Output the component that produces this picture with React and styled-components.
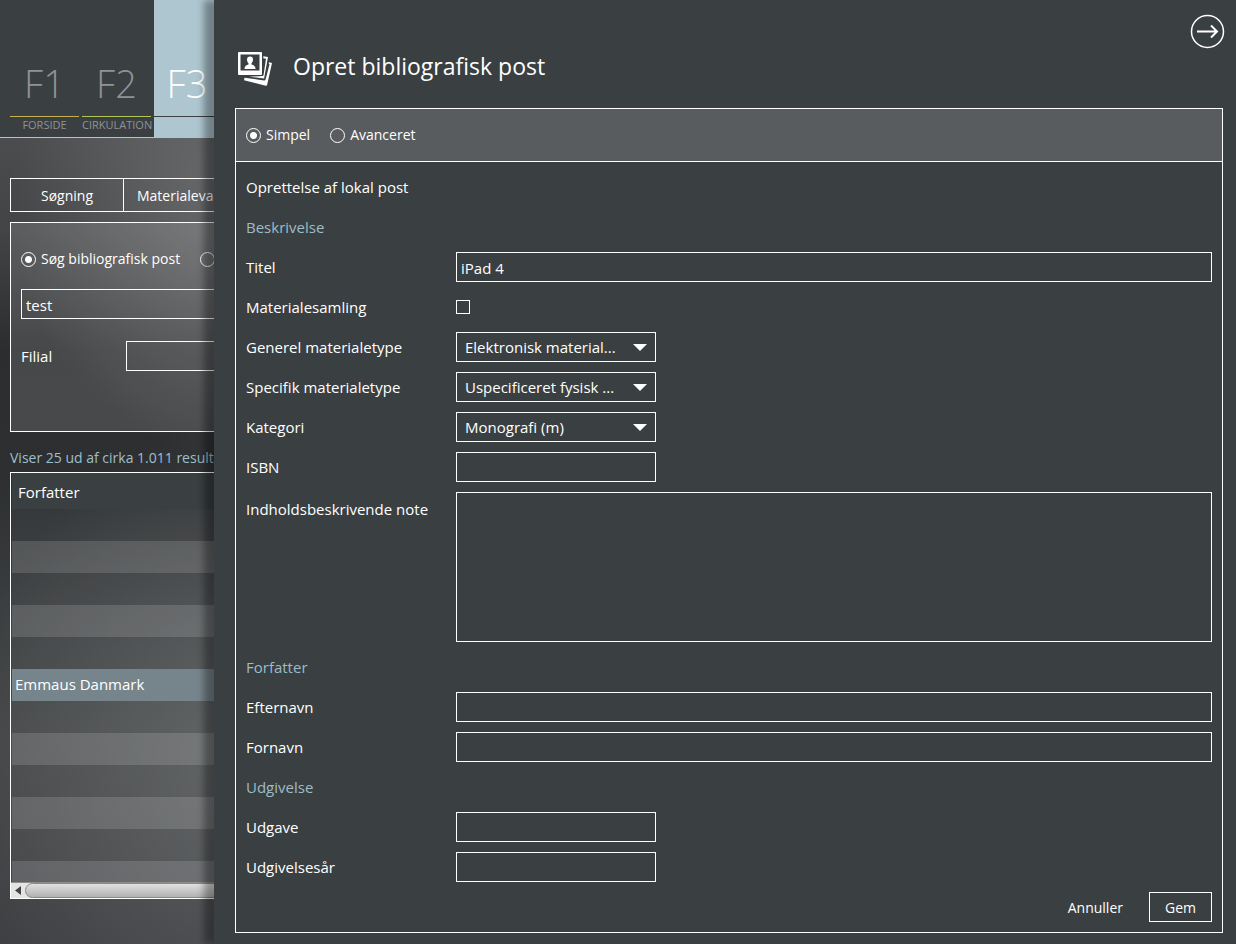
import { useState } from "react";
import styled, { createGlobalStyle, css } from "styled-components";

const GlobalStyle = createGlobalStyle`
  * {
    box-sizing: border-box;
  }

  body {
    margin: 0;
    background: #3a3f42;
    color: #ffffff;
    font-family: "Open Sans", "Noto Sans", sans-serif;
    font-size: 15px;
    line-height: 20px;
  }

  input, select, textarea, button {
    font: inherit;
    color: inherit;
    margin: 0;
  }
`;

const Page = styled.div`
  display: flex;
  min-height: 100vh;
`;

/* search page, partly covered by the drawer */
const Behind = styled.div`
  flex: 0 0 214px;
  overflow: hidden;
  display: flex;
  flex-direction: column;
  background:
    radial-gradient(ellipse 230px 260px at 240px 200px, rgba(130, 132, 134, 0.6), rgba(130, 132, 134, 0) 100%),
    radial-gradient(ellipse 300px 340px at 260px 760px, rgba(125, 128, 130, 0.5), rgba(125, 128, 130, 0) 100%),
    linear-gradient(180deg, #4a4c4e 138px, #424446 230px, #2b2d2f 350px, #2d2f31 480px, #3a3d3f 600px, #434546 740px, #3e4043 100%);
`;

const Tabs = styled.nav`
  display: flex;
  width: 300px;
  height: 138px;
  padding-left: 10px;
  background: #3a3f42;
  border-bottom: 1px solid #aec6d0;
`;

const Tab = styled.a`
  display: flex;
  flex-direction: column;
  justify-content: flex-end;
  flex: 0 0 72px;
  min-width: 0;
  padding-right: 3px;
  text-align: center;
  text-decoration: none;
  color: #909294;
  ${(p) => p.$active && css`
    color: #ffffff;
    background: #aec6d0;
    padding-right: 6px;
  `}
`;

const TabKey = styled.span`
  font-size: 38px;
  font-weight: 300;
  line-height: 48px;
  padding-bottom: 9px;
  border-bottom: 1px solid ${(p) => p.$line};
`;

const TabName = styled.span`
  height: 20px;
  font-size: 11px;
  line-height: 16px;
`;

const Content = styled.div`
  width: 500px;
  padding: 40px 0 0 10px;
`;

const SubTabs = styled.div`
  display: flex;
  border: 1px solid #ffffff;
`;

const SubTab = styled.button`
  height: 32px;
  padding: 2px 13px 0;
  min-width: ${(p) => p.$min || 0}px;
  border: 0;
  border-right: 1px solid #ffffff;
  background: none;
  font-size: 14px;
`;

const SearchBox = styled.section`
  height: 210px;
  margin-top: 10px;
  padding: 26px 10px 0;
  border: 1px solid #ffffff;
  background: rgba(255, 255, 255, 0.13);
`;

const RadioRow = styled.div`
  display: flex;
  align-items: center;
  gap: 20px;
  font-size: 14px;
`;

const RadioLabel = styled.label`
  display: flex;
  align-items: center;
  gap: 5px;
`;

const Radio = styled.input`
  appearance: none;
  width: 15px;
  height: 15px;
  border: 1px solid #ffffff;
  border-radius: 50%;

  &:checked {
    background: radial-gradient(circle, #ffffff 3px, transparent 4px);
  }
`;

const TextInput = styled.input`
  width: ${(p) => (p.$short ? "200px" : "100%")};
  height: 30px;
  padding: 2px 4px 0;
  border: 1px solid #ffffff;
  border-radius: 0;
  background: transparent;
  outline: none;
`;

const SearchField = styled.div`
  margin-top: 20px;
  display: flex;
`;

const BranchField = styled.div`
  display: flex;
  align-items: center;
  margin-top: 22px;

  label {
    flex: 0 0 105px;
  }
`;

const ResultInfo = styled.p`
  margin: 16px 0 4px;
  font-size: 14px;
  color: #9dbfcc;
  white-space: nowrap;
`;

const ResultBox = styled.div`
  height: 427px;
  display: flex;
  flex-direction: column;
  border: 1px solid #ffffff;
  padding-left: 1px;
`;

const ResultTable = styled.table`
  width: 100%;
  table-layout: fixed;
  border-collapse: collapse;

  th {
    width: 200px;
    height: 36px;
    padding: 2px 6px 0;
    font-weight: 400;
    text-align: left;
    background: #3a3f42;
    border-right: 2px solid #45484b;
  }

  td {
    height: 32px;
    padding: 0 3px 2px;
  }

  tbody tr:nth-child(odd) {
    background: rgba(255, 255, 255, 0.03);
  }

  tbody tr:nth-child(even) {
    background: rgba(255, 255, 255, 0.16);
  }

  tbody tr.selected {
    background: #76858b;
  }
`;

const TableClip = styled.div`
  flex: 1;
  overflow: hidden;
`;

const ScrollBar = styled.div`
  display: flex;
  height: 16px;
  margin-left: -1px;
  border-top: 1px solid #8c8c8c;
  background: #e4e4e4;

  svg {
    flex: 0 0 14px;
  }
`;

const Thumb = styled.div`
  flex: 1;
  border: 1px solid #888888;
  border-radius: 8px;
  background: linear-gradient(180deg, #e0e0e0, #b2b2b2);
`;

const Drawer = styled.main`
  position: relative;
  flex: 1;
  min-width: 0;
  display: flex;
  flex-direction: column;
  padding: 14px 13px 11px 21px;
  background: #3a3f42;
  box-shadow: -10px 0 7px rgba(0, 0, 0, 0.35);
`;

const DrawerHead = styled.header`
  display: flex;
  align-items: flex-start;
  height: 94px;
`;

const HeadIcon = styled.svg`
  margin: 36px 20px 0 1px;
  flex: none;
`;

const Heading = styled.h1`
  flex: 1;
  margin: 36px 0 0;
  font-size: 23px;
  font-weight: 400;
  line-height: 32px;
`;

const CloseButton = styled.button`
  display: flex;
  padding: 0;
  margin-right: -2px;
  border: 0;
  background: none;
`;

const Panel = styled.form`
  flex: 1;
  display: flex;
  flex-direction: column;
  border: 1px solid #ffffff;
`;

const ModeBar = styled.div`
  height: 53px;
  display: flex;
  align-items: center;
  padding: 0 10px;
  background: #585c5f;
  border-bottom: 1px solid #ffffff;
`;

const Fields = styled.div`
  flex: 1;
  display: flex;
  flex-direction: column;
  gap: 10px;
  padding: 10px 10px 0;
`;

const Line = styled.div`
  display: flex;
  align-items: center;
  height: 30px;
`;

const Section = styled(Line)`
  color: #9dbcc6;
`;

const Field = styled.div`
  display: grid;
  grid-template-columns: 210px 1fr;
  align-items: ${(p) => (p.$top ? "start" : "center")};
  min-height: 30px;

  label {
    padding-top: ${(p) => (p.$top ? "7px" : "0")};
  }
`;

const Check = styled.input`
  appearance: none;
  width: 14px;
  height: 14px;
  border: 1px solid #ffffff;

  &:checked {
    background: #ffffff;
  }
`;

const SelectWrap = styled.div`
  display: grid;
  grid-template-columns: 1fr 30px;
  align-items: center;
  width: 200px;
  height: 30px;
  border: 1px solid #ffffff;

  select {
    grid-area: 1 / 1 / 2 / 3;
    appearance: none;
    width: 100%;
    height: 28px;
    padding: 0 30px 0 8px;
    border: 0;
    background: transparent;
    outline: none;
  }

  option {
    background: #3a3f42;
  }

  svg {
    grid-area: 1 / 2 / 2 / 3;
    justify-self: center;
    pointer-events: none;
  }
`;

const Note = styled.textarea`
  display: block;
  width: 100%;
  height: 150px;
  padding: 4px;
  border: 1px solid #ffffff;
  border-radius: 0;
  background: transparent;
  resize: none;
  outline: none;
`;

const Actions = styled.footer`
  display: flex;
  justify-content: flex-end;
  gap: 10px;
  padding: 10px;
`;

const Button = styled.button`
  height: 30px;
  padding: 2px 15px 0;
  border: 1px solid ${(p) => (p.$plain ? "transparent" : "#ffffff")};
  background: none;
  font-size: 14px;
`;

const rows = ["", "", "", "", "", "Emmaus Danmark", "", "", "", "", "", ""];

function Select({ id, value }) {
  return (
    <SelectWrap>
      <select id={id} defaultValue={value}>
        <option value={value}>{value}</option>
      </select>
      <svg width="14" height="7" viewBox="0 0 14 7">
        <path d="M0 0h14L7 7z" fill="#fff" />
      </svg>
    </SelectWrap>
  );
}

function TextField({ id, label, short, value }) {
  return (
    <Field>
      <label htmlFor={id}>{label}</label>
      <TextInput id={id} $short={short} defaultValue={value} />
    </Field>
  );
}

function SelectField({ id, label, value }) {
  return (
    <Field>
      <label htmlFor={id}>{label}</label>
      <Select id={id} value={value} />
    </Field>
  );
}

function SearchPage() {
  return (
    <Behind>
      <Tabs>
        <Tab href="#f1"><TabKey $line="#c4ae50">F1</TabKey><TabName>FORSIDE</TabName></Tab>
        <Tab href="#f2"><TabKey $line="#b0c458">F2</TabKey><TabName>CIRKULATION</TabName></Tab>
        <Tab href="#f3" $active><TabKey $line="#3a3f42">F3</TabKey><TabName /></Tab>
      </Tabs>
      <Content>
        <SubTabs>
          <SubTab type="button" $min={113}>Søgning</SubTab>
          <SubTab type="button">Materialevalg</SubTab>
        </SubTabs>
        <SearchBox>
          <RadioRow>
            <RadioLabel><Radio type="radio" name="search" defaultChecked />Søg bibliografisk post</RadioLabel>
            <RadioLabel><Radio type="radio" name="search" aria-label="Søg eksemplar" /></RadioLabel>
          </RadioRow>
          <SearchField><TextInput aria-label="Søg" defaultValue="test" /></SearchField>
          <BranchField>
            <label htmlFor="branch">Filial</label>
            <TextInput id="branch" />
          </BranchField>
        </SearchBox>
        <ResultInfo>Viser 25 ud af cirka 1.011 resultater</ResultInfo>
        <ResultBox>
          <TableClip>
            <ResultTable>
              <thead>
                <tr><th>Forfatter</th><th /></tr>
              </thead>
              <tbody>
                {rows.map((name, i) => (
                  <tr key={i} className={name ? "selected" : ""}><td>{name}</td><td /></tr>
                ))}
              </tbody>
            </ResultTable>
          </TableClip>
          <ScrollBar>
            <svg width="14" height="15" viewBox="0 0 14 15"><path d="M10 3v9L4 7.500z" fill="#444" /></svg>
            <Thumb />
          </ScrollBar>
        </ResultBox>
      </Content>
    </Behind>
  );
}

export default function App() {
  const [mode, setMode] = useState("simpel");

  return (
    <Page>
      <GlobalStyle />
      <SearchPage />
      <Drawer>
        <DrawerHead>
          <HeadIcon width="37" height="37" viewBox="0 0 37 37" fill="none">
            <path fillRule="evenodd" fill="#fff" d="M3 2h22q1 0 1 1v21q0 1-1 1H3q-1 0-1-1V3q0-1 1-1zM4.500 4.500v16h19v-16z" />
            <path fill="#fff" d="M14 6.500a3 3.300 0 0 1 3 3.300c0 1.500-.7 2.600-1.500 3.400v1.200c2.500.6 4 1.600 4 4.600H8.500c0-3 1.500-4 4-4.600v-1.200c-.8-.8-1.500-1.900-1.500-3.400a3 3.300 0 0 1 3-3.300z" />
            <path fill="#fff" d="M27.300 6.200l4.700.9-3.900 21.300-14.600-1.700 12.700-.7q1.200-.1 1.400-1.300l2.400-16-2.700-.5z" />
            <path fill="#fff" d="M33 12.200l3 .9-4.900 21.800q-.3 1-1.300.8L8 30.300l.6-2.600 19.500 2.800q1.200.1 1.500-1.100l4-15.300-.9-.3z" />
          </HeadIcon>
          <Heading>Opret bibliografisk post</Heading>
          <CloseButton type="button" aria-label="Luk">
            <svg width="35" height="35" viewBox="0 0 35 35" fill="none" stroke="#fff">
              <circle cx="17.500" cy="17.500" r="16" strokeWidth="1.500" />
              <path d="M7 17.500h20M21 11.500l6 6-6 6" strokeWidth="2" />
            </svg>
          </CloseButton>
        </DrawerHead>
        <Panel onSubmit={(e) => e.preventDefault()}>
          <ModeBar>
            <RadioRow>
              <RadioLabel>
                <Radio type="radio" name="mode" checked={mode === "simpel"} onChange={() => setMode("simpel")} />
                Simpel
              </RadioLabel>
              <RadioLabel>
                <Radio type="radio" name="mode" checked={mode === "avanceret"} onChange={() => setMode("avanceret")} />
                Avanceret
              </RadioLabel>
            </RadioRow>
          </ModeBar>
          <Fields>
            <Line>Oprettelse af lokal post</Line>
            <Section>Beskrivelse</Section>
            <TextField id="titel" label="Titel" value="iPad 4" />
            <Field>
              <label htmlFor="samling">Materialesamling</label>
              <Check id="samling" type="checkbox" />
            </Field>
            <SelectField id="generel" label="Generel materialetype" value="Elektronisk material..." />
            <SelectField id="specifik" label="Specifik materialetype" value="Uspecificeret fysisk ..." />
            <SelectField id="kategori" label="Kategori" value="Monografi (m)" />
            <TextField id="isbn" label="ISBN" short />
            <Field $top>
              <label htmlFor="note">Indholdsbeskrivende note</label>
              <Note id="note" />
            </Field>
            <Section>Forfatter</Section>
            <TextField id="efternavn" label="Efternavn" />
            <TextField id="fornavn" label="Fornavn" />
            <Section>Udgivelse</Section>
            <TextField id="udgave" label="Udgave" short />
            <TextField id="aar" label="Udgivelsesår" short />
          </Fields>
          <Actions>
            <Button type="button" $plain>Annuller</Button>
            <Button type="submit">Gem</Button>
          </Actions>
        </Panel>
      </Drawer>
    </Page>
  );
}
